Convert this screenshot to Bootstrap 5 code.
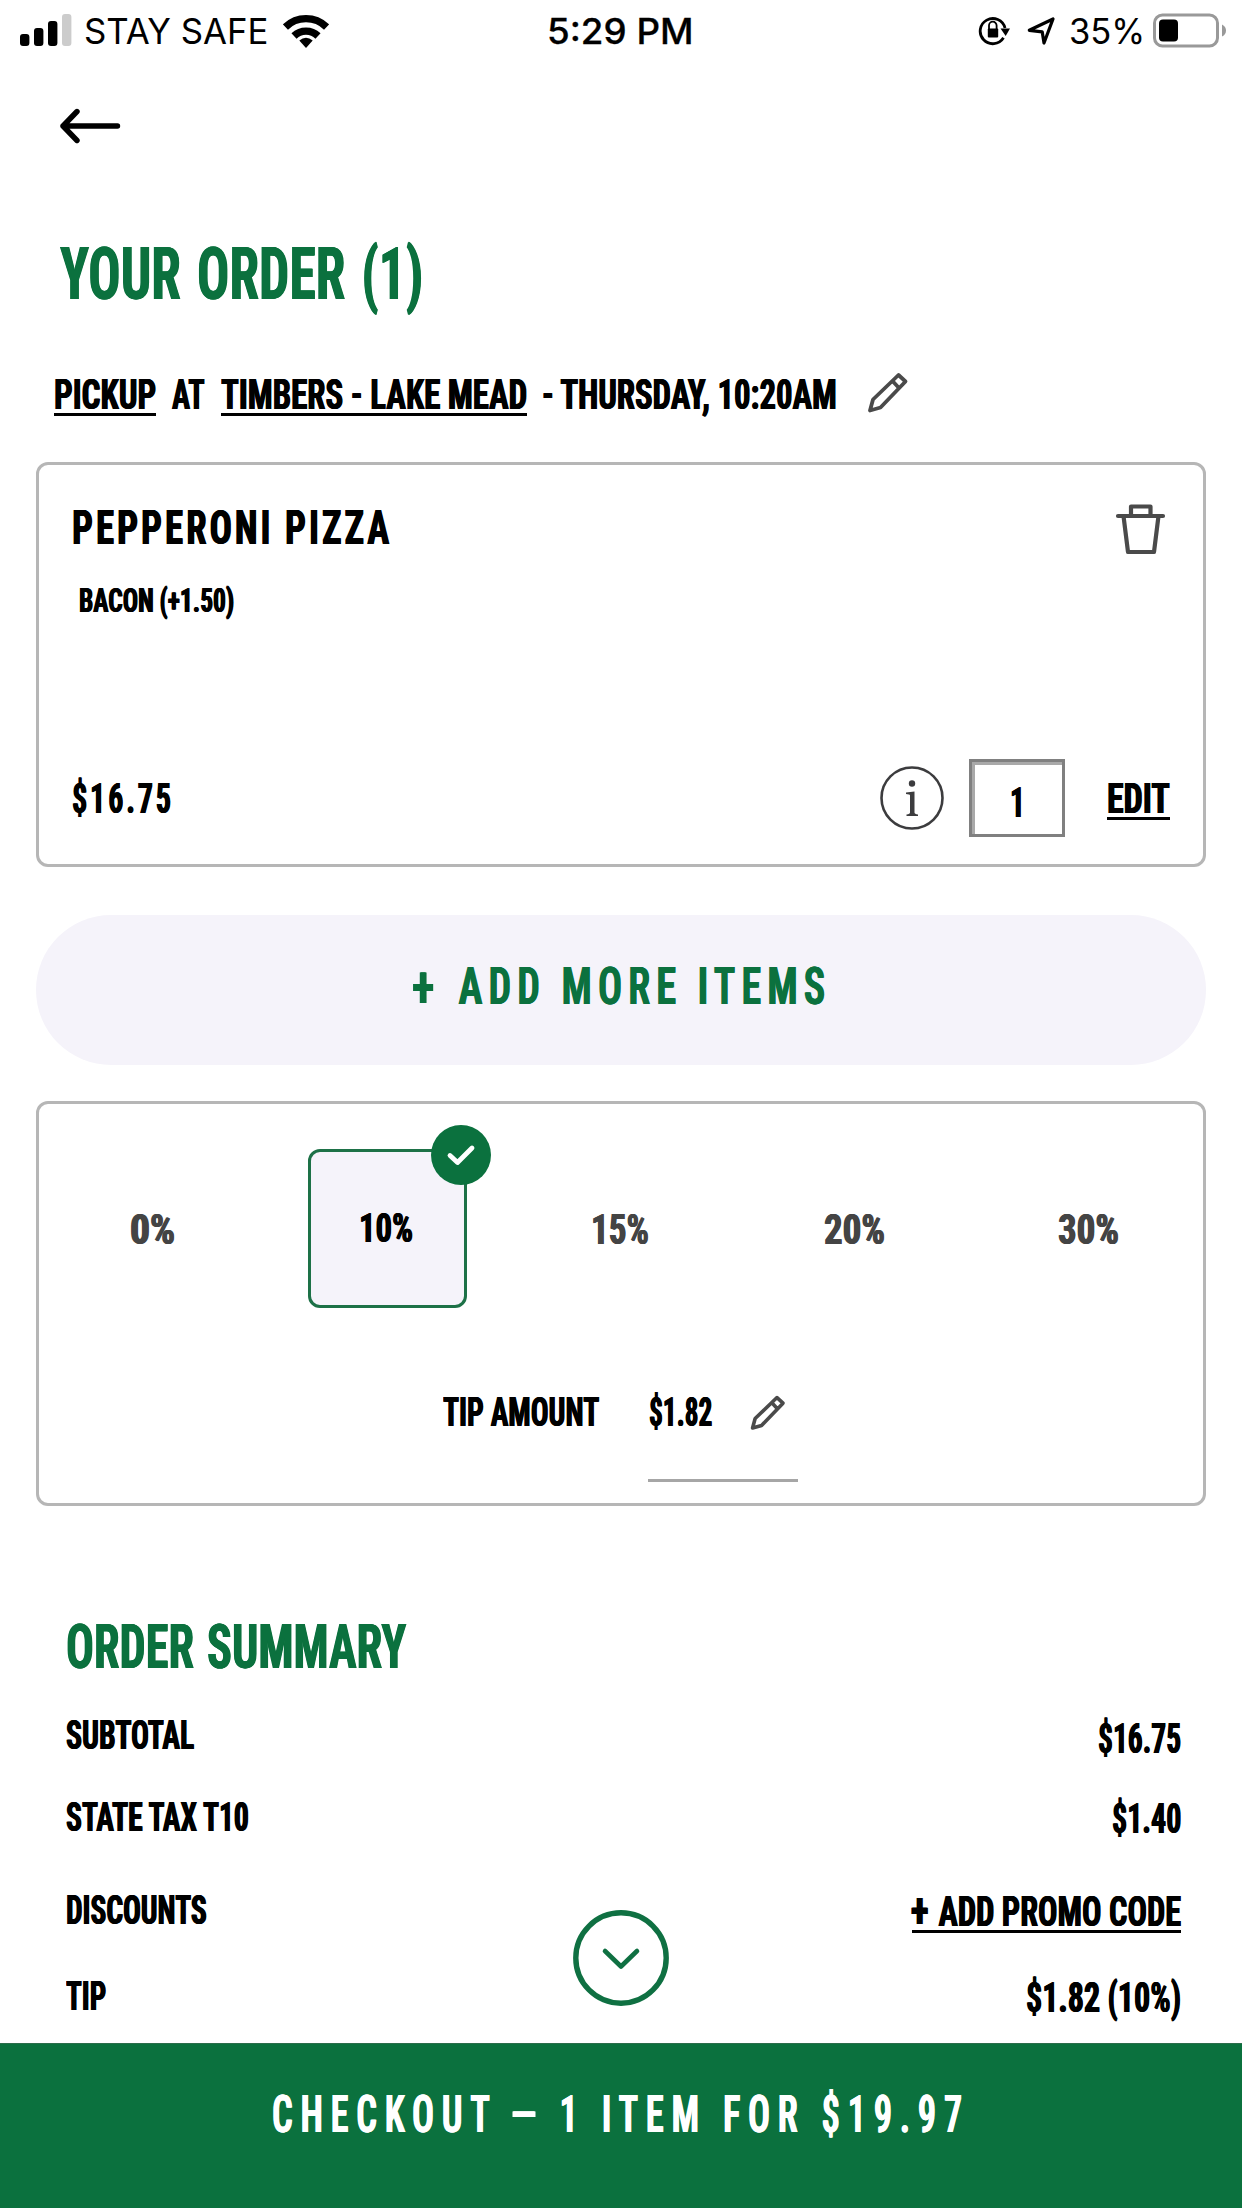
<!DOCTYPE html>
<html lang="en">
<head>
<meta charset="utf-8">
<meta name="viewport" content="width=device-width, initial-scale=1">
<title>Your Order</title>
<link href="https://cdn.jsdelivr.net/npm/bootstrap@5.3.0/dist/css/bootstrap.min.css" rel="stylesheet">
<style>
  :root { --brand: #0b713e; --tint: #f5f3fa; --line: #b6b6b6; }
  body { width: 1242px; height: 2208px; overflow: hidden; background: #fff; color: #000; font-family: Roboto, "Liberation Sans", sans-serif; }
  svg { display: block; flex: none; }
  .status { height: 62px; padding: 0 14px 0 20px; font-family: Inter, "Liberation Sans", sans-serif; font-size: 35px; line-height: 62px; }
  .status .side { width: 500px; }
  .status .cond { font-size: 35px; font-weight: 400; text-shadow: none; }
  .status .clock { font-weight: 500; -webkit-text-stroke: .3px #000; margin-right: 7px; }
  .carrier { margin-left: 12px; }
  .battery-pct { margin-left: 13px; }
  /* condensed display lettering: each label is squeezed to its data-w width */
  .cond { display: inline-block; white-space: nowrap; flex: none; font-weight: 700; font-size: 43px; line-height: 60px; height: 60px; text-shadow: .7px 0 0 currentColor, -.7px 0 0 currentColor; }
  .cond > span { display: inline-block; transform-origin: 0 50%; font-stretch: 75%; }
  .fs-a { font-size: 73px; line-height: 80px; height: 80px; }
  .fs-a > span { word-spacing: 5px; }
  .fs-b { font-size: 61px; line-height: 70px; height: 70px; }
  .fs-b > span { word-spacing: 3px; }
  .fs-c { font-size: 52px; font-weight: 600; }
  .fs-d { font-size: 49px; }
  .fs-e { font-size: 40px; }
  .fs-f { font-size: 34px; }
  .wide-2 > span { letter-spacing: 4px; }
  .wide-3 > span { letter-spacing: 8px; }
  .wide-4 > span { letter-spacing: 11px; }
  .dash { display: inline-block; transform: scaleX(1.4); margin: 0 3px; letter-spacing: 0; padding-right: 9px; }
  .plus { display: inline-block; transform: scale(1.15); margin-right: 5px; }
  .green { color: var(--brand); }
  .uline { border-bottom: 3px solid #000; height: 52px; margin-bottom: 8px; }
  .back-row { height: 127px; padding: 0 59px; }
  .head-row { height: 170px; padding-left: 60px; }
  .pickup { height: 98px; margin-top: 5px; padding-left: 54px; }
  .pane { margin: 0 36px; height: 405px; border: 3px solid var(--line); border-radius: 12px; }
  .item-pane { padding: 33px 35px 0 33px; }
  .qty { width: 96px; height: 78px; border: 3px solid #808080; box-shadow: inset 3px 3px 0 #a9a9a9; }
  .info { width: 64px; height: 64px; }
  .add-more { height: 150px; margin: 48px 36px 36px; border-radius: 75px; background: var(--tint); }
  .tips { height: 159px; margin: 45px -3px 0; }
  .tip-opt { flex: 1 1 0; color: #444; }
  .tip-opt > .cond { margin-right: 2px; }
  .tip-on { width: 159px; height: 159px; border: 3px solid #1d7147; border-radius: 12px; background: var(--tint); color: #000; }
  .tick { position: absolute; right: -27px; top: -27px; }
  .tip-amt { margin-top: 60px; padding-left: 404px; }
  .amt-field { width: 150px; height: 114px; border-bottom: 3px solid #a6a6a6; }
  .summary { height: 537px; padding: 106px 61px 0 66px; }
  .sum-row { height: 60px; }
  .scroll-btn { position: absolute; left: 573px; top: 404px; }
  .checkout { height: 165px; background: var(--brand); color: #fff; padding-bottom: 22px; border-top: 1px solid #2b6d4b; }
</style>
</head>
<body class="d-flex flex-column">

<header class="status d-flex justify-content-between align-items-center">
  <div class="side d-flex align-items-center">
    <svg width="52" height="34" viewBox="0 0 52 34"><g><rect x="0" y="20" width="9.4" height="12" rx="3"/><rect x="14" y="14" width="9.4" height="18" rx="3"/><rect x="28" y="7" width="9.4" height="25" rx="3"/><rect x="42" y="0" width="9.4" height="32" rx="3" fill="#ccc"/></g></svg>
    <div class="cond carrier" data-w="185"><span>STAY SAFE</span></div>
    <svg style="margin-left:14px" width="46" height="36" viewBox="0 0 46 36"><g fill="none" stroke="#000" stroke-width="7.4"><path d="M2.4 14A29.500 29.500 0 0 1 43.600 14"/><path d="M11 23A17.300 17.300 0 0 1 35 23"/></g><path d="M16.300 27.600Q23 22 29.700 27.600L23 35Z"/></svg>
  </div>
  <div class="cond clock" data-w="147"><span>5:29 PM</span></div>
  <div class="side d-flex align-items-center justify-content-end">
    <svg width="34" height="32" viewBox="0 0 34 32"><path d="M25.500 22.800A12.600 12.600 0 1 1 27 13" fill="none" stroke="#000" stroke-width="2.800"/><path d="M22.500 13.500H32L27.700 21Z"/><path d="M11.200 15V11.500a3.800 3.800 0 0 1 7.600 0V15" transform="translate(-.2 -1)" fill="none" stroke="#000" stroke-width="1.800"/><rect x="9.800" y="13.500" width="10.400" height="9" rx="1"/></svg>
    <svg style="margin-left:15px" width="29" height="30" viewBox="0 0 29 30"><path d="M2.300 14.300L26 3L17 27L15.200 15.800Z" fill="none" stroke="#000" stroke-width="3.200" stroke-linejoin="round"/></svg>
    <div class="cond battery-pct" data-w="76"><span>35%</span></div>
    <svg style="margin-left:8px" width="75" height="36" viewBox="0 0 75 36"><rect x="1.500" y="2" width="63" height="31" rx="8" fill="none" stroke="#999" stroke-width="3"/><rect x="6" y="6.500" width="19" height="22" rx="4"/><path d="M69 11.500q4 2 4 6t-4 6z" fill="#999"/></svg>
  </div>
</header>

<nav class="back-row d-flex align-items-center">
  <svg width="64" height="36" viewBox="0 0 64 36"><path d="M18 3.500L4 18L18 32.500M4 18H58.500" fill="none" stroke="#000" stroke-width="5.400" stroke-linecap="round" stroke-linejoin="round"/></svg>
</nav>

<div class="head-row d-flex align-items-center"><h1 class="cond fs-a green m-0" data-w="363"><span>YOUR ORDER (1)</span></h1></div>

<section class="pickup d-flex">
  <a class="cond uline text-reset text-decoration-none" data-w="102"><span>PICKUP</span></a>
  <span class="cond" style="margin-left:16px" data-w="33"><span>AT</span></span>
  <a class="cond uline text-reset text-decoration-none" style="margin-left:16px" data-w="306"><span>TIMBERS - LAKE MEAD</span></a>
  <span class="cond" style="margin-left:15px" data-w="295"><span>- THURSDAY, 10:20AM</span></span>
  <svg style="margin:8px 0 0 30px" width="42" height="42" viewBox="0 0 42 42"><g fill="none" stroke="#4a4a4a" stroke-width="3.800" stroke-linejoin="round"><path d="M3 38.500L6 27.500L31.500 3L38.500 9.500L13.500 35.500ZM25.500 9L32 16"/></g></svg>
</section>

<section class="pane item-pane d-flex flex-column">
  <div class="d-flex justify-content-between">
    <div>
      <h2 class="cond fs-d wide-2 m-0 d-block" data-w="317"><span>PEPPERONI PIZZA</span></h2>
      <div class="cond fs-f d-block" style="margin:12px 0 0 7px" data-w="155"><span>BACON (+1.50)</span></div>
    </div>
    <svg style="margin-top:4px" width="54" height="54" viewBox="0 0 54 54"><g fill="none" stroke="#4a4a4a" stroke-width="4.200" stroke-linejoin="round" stroke-linecap="round"><path d="M4 14H49M17 14V4.500H36.500V14M9.500 14L14 50H40L44.500 14"/></g></svg>
  </div>
  <div class="d-flex align-items-center" style="margin-top:129px">
    <div class="cond wide-2 me-auto" data-w="99"><span>$16.75</span></div>
    <svg class="info" viewBox="0 0 64 64"><circle cx="32" cy="32" r="30.500" fill="none" stroke="#3c3c3e" stroke-width="2.600"/><circle cx="32" cy="17.500" r="3.200" fill="#3c3c3e"/><path d="M26 26.500L34.500 25.500V46.500Q34.500 48 38 48.500V50H26.500V48.500Q30 48 30 46.500V29.500Q30 28 26 28Z" fill="#3c3c3e"/></svg>
    <div class="qty d-flex justify-content-center align-items-center" style="margin-left:25px"><span class="cond" style="margin-top:8px" data-w="15"><span>1</span></span></div>
    <a class="cond uline text-reset text-decoration-none" style="margin-left:42px;margin-right:-2px" data-w="63"><span>EDIT</span></a>
  </div>
</section>

<button type="button" class="add-more btn border-0 p-0 d-flex justify-content-center align-items-center"><span class="cond fs-c green wide-3" style="margin:-6px 4px 0 0" data-w="411"><span><span class="plus">+</span> ADD MORE ITEMS</span></span></button>

<section class="pane">
  <div class="tips d-flex">
    <div class="tip-opt d-flex justify-content-center align-items-center"><span class="cond" data-w="45"><span>0%</span></span></div>
    <div class="tip-opt d-flex justify-content-center align-items-center"><div class="tip-on position-relative d-flex justify-content-center align-items-center"><span class="cond fs-e" style="margin-right:2px" data-w="54"><span>10%</span></span>
      <svg class="tick" width="60" height="60" viewBox="0 0 60 60"><circle cx="30" cy="30" r="30" fill="#0b713e"/><path d="M19 30.500L26.500 37.500L41 23" fill="none" stroke="#fff" stroke-width="4.800" stroke-linecap="round" stroke-linejoin="round"/></svg></div></div>
    <div class="tip-opt d-flex justify-content-center align-items-center"><span class="cond" data-w="58"><span>15%</span></span></div>
    <div class="tip-opt d-flex justify-content-center align-items-center"><span class="cond" data-w="61"><span>20%</span></span></div>
    <div class="tip-opt d-flex justify-content-center align-items-center"><span class="cond" data-w="61"><span>30%</span></span></div>
  </div>
  <div class="tip-amt d-flex">
    <span class="cond fs-e" style="margin-top:15px" data-w="156"><span>TIP AMOUNT</span></span>
    <div class="amt-field d-flex" style="margin-left:49px"><span class="cond fs-e" style="margin:15px 0 0 1px" data-w="63"><span>$1.82</span></span>
      <svg style="margin:27px 0 0 38px" width="36" height="36" viewBox="0 0 42 42"><g fill="none" stroke="#4a4a4a" stroke-width="4.200" stroke-linejoin="round"><path d="M3 38.500L6 27.500L31.500 3L38.500 9.500L13.500 35.500ZM25.500 9L32 16"/></g></svg></div>
  </div>
</section>

<section class="summary position-relative">
  <h2 class="cond fs-b green d-block m-0" data-w="340"><span>ORDER SUMMARY</span></h2>
  <div class="sum-row d-flex justify-content-between" style="margin-top:24px"><span class="cond fs-e" data-w="128"><span>SUBTOTAL</span></span><span class="cond" style="margin-top:2px" data-w="83"><span>$16.75</span></span></div>
  <div class="sum-row d-flex justify-content-between" style="margin-top:22px"><span class="cond fs-e" data-w="183"><span>STATE TAX T10</span></span><span class="cond" data-w="69"><span>$1.40</span></span></div>
  <div class="sum-row d-flex justify-content-between" style="margin-top:33px"><span class="cond fs-e" data-w="141"><span>DISCOUNTS</span></span><a class="cond uline text-reset text-decoration-none" data-w="269"><span><span class="plus">+</span> ADD PROMO CODE</span></a></div>
  <div class="sum-row d-flex justify-content-between" style="margin-top:26px"><span class="cond fs-e" data-w="40"><span>TIP</span></span><span class="cond" data-w="155"><span>$1.82 (10%)</span></span></div>
  <svg class="scroll-btn" width="96" height="96" viewBox="0 0 96 96"><circle cx="48" cy="48" r="45.200" fill="#fff" stroke="#0f7042" stroke-width="5.400"/><path d="M32 41L48 56.500L64 41" fill="none" stroke="#0f7042" stroke-width="4.600" stroke-linecap="round" stroke-linejoin="round"/></svg>
</section>

<footer class="checkout d-flex justify-content-center align-items-center"><span class="cond fs-c wide-4" style="margin-right:8px" data-w="690"><span>CHECKOUT <span class="dash">–</span> 1 ITEM FOR $19.97</span></span></footer>

<script src="https://cdn.jsdelivr.net/npm/bootstrap@5.3.0/dist/js/bootstrap.bundle.min.js"></script>
<script>
  document.querySelectorAll('[data-w]').forEach(function (el) {
    var inner = el.firstElementChild, w = +el.dataset.w;
    var gap = parseFloat(getComputedStyle(inner).letterSpacing) || 0;
    var natural = inner.offsetWidth - gap;
    el.style.width = w + 'px';
    inner.style.transform = 'scaleX(' + (w / natural) + ')';
  });
</script>
</body>
</html>
